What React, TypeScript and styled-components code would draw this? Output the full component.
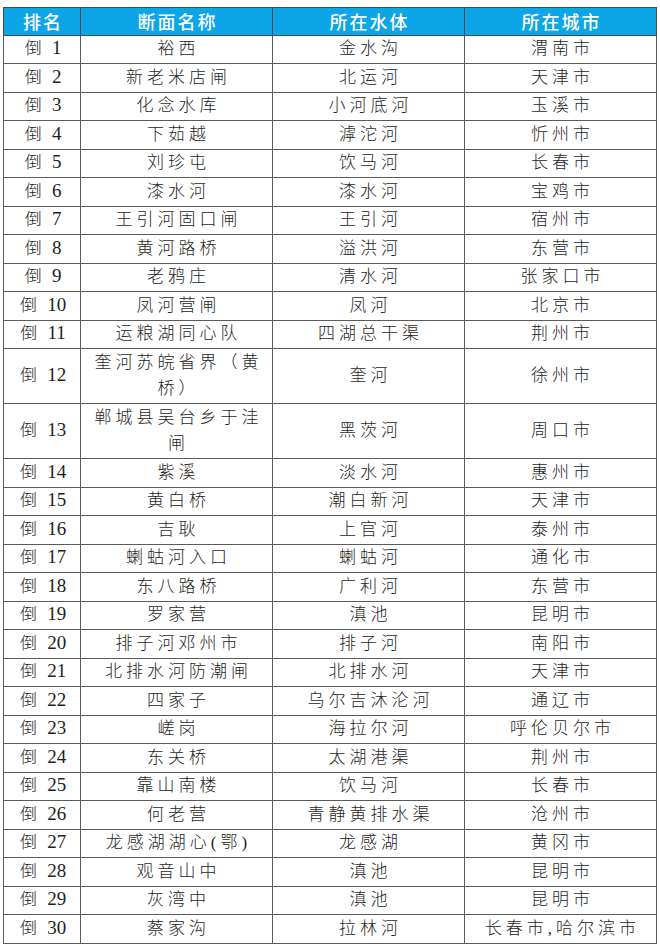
import React from "react";
import styled, { createGlobalStyle } from "styled-components";

const GlobalStyle = createGlobalStyle`
  html, body {
    margin: 0;
    padding: 0;
    background: #ffffff;
  }
`;

const Page = styled.div`
  padding: 7px 0 0 3px;
`;

const Table = styled.table`
  width: 653px;
  table-layout: fixed;
  border-collapse: collapse;
  border: 1px solid #4a4a4a;
  font-family: "Liberation Serif", "Noto Sans CJK SC", serif;
  color: #1e1e1e;
`;

const HeadRow = styled.tr`
  height: 27.5px;
  background: #0ba5e8;
`;

const HeadCell = styled.th`
  border: 1px solid #3c4a55;
  padding: 0 0 0 2px;
  font-family: "Noto Sans CJK SC", sans-serif;
  font-weight: 500;
  font-size: 18px;
  letter-spacing: 2px;
  line-height: 20px;
  color: #ffffff;
  text-align: center;
  vertical-align: middle;
`;

const Row = styled.tr<{ $tall?: boolean }>`
  height: ${(p) => (p.$tall ? "55px" : "28.5px")};
`;

const Cell = styled.td`
  border: 1px solid #5a5a5a;
  padding: 0 0 0 4px;
  font-size: 17px;
  font-weight: 300;
  letter-spacing: 4px;
  line-height: 26px;
  text-align: center;
  vertical-align: middle;
  white-space: nowrap;
`;

const RankCell = styled(Cell)`
  letter-spacing: 3px;
  padding-left: 2px;
`;

const Num = styled.span`
  letter-spacing: 0;
  font-size: 19px;
  font-weight: 400;
  line-height: 1;
`;

type Item = [string[], string, string];

const rows: Item[] = [
  [["裕西"], "金水沟", "渭南市"],
  [["新老米店闸"], "北运河", "天津市"],
  [["化念水库"], "小河底河", "玉溪市"],
  [["下茹越"], "滹沱河", "忻州市"],
  [["刘珍屯"], "饮马河", "长春市"],
  [["漆水河"], "漆水河", "宝鸡市"],
  [["王引河固口闸"], "王引河", "宿州市"],
  [["黄河路桥"], "溢洪河", "东营市"],
  [["老鸦庄"], "清水河", "张家口市"],
  [["凤河营闸"], "凤河", "北京市"],
  [["运粮湖同心队"], "四湖总干渠", "荆州市"],
  [["奎河苏皖省界（黄", "桥）"], "奎河", "徐州市"],
  [["郸城县吴台乡于洼", "闸"], "黑茨河", "周口市"],
  [["紫溪"], "淡水河", "惠州市"],
  [["黄白桥"], "潮白新河", "天津市"],
  [["吉耿"], "上官河", "泰州市"],
  [["蝲蛄河入口"], "蝲蛄河", "通化市"],
  [["东八路桥"], "广利河", "东营市"],
  [["罗家营"], "滇池", "昆明市"],
  [["排子河邓州市"], "排子河", "南阳市"],
  [["北排水河防潮闸"], "北排水河", "天津市"],
  [["四家子"], "乌尔吉沐沦河", "通辽市"],
  [["嵯岗"], "海拉尔河", "呼伦贝尔市"],
  [["东关桥"], "太湖港渠", "荆州市"],
  [["靠山南楼"], "饮马河", "长春市"],
  [["何老营"], "青静黄排水渠", "沧州市"],
  [["龙感湖湖心(鄂)"], "龙感湖", "黄冈市"],
  [["观音山中"], "滇池", "昆明市"],
  [["灰湾中"], "滇池", "昆明市"],
  [["蔡家沟"], "拉林河", "长春市,哈尔滨市"],
];

export default function App() {
  return (
    <Page>
      <GlobalStyle />
      <Table>
        <colgroup>
          <col style={{ width: 77 }} />
          <col style={{ width: 192 }} />
          <col style={{ width: 192 }} />
          <col style={{ width: 192 }} />
        </colgroup>
        <thead>
          <HeadRow>
            <HeadCell>排名</HeadCell>
            <HeadCell>断面名称</HeadCell>
            <HeadCell>所在水体</HeadCell>
            <HeadCell>所在城市</HeadCell>
          </HeadRow>
        </thead>
        <tbody>
          {rows.map(([name, water, city], i) => (
            <Row key={i} $tall={name.length > 1}>
              <RankCell>
                倒 <Num>{i + 1}</Num>
              </RankCell>
              <Cell>
                {name.map((line, j) => (
                  <React.Fragment key={j}>
                    {j > 0 && <br />}
                    {line}
                  </React.Fragment>
                ))}
              </Cell>
              <Cell>{water}</Cell>
              <Cell>{city}</Cell>
            </Row>
          ))}
        </tbody>
      </Table>
    </Page>
  );
}
